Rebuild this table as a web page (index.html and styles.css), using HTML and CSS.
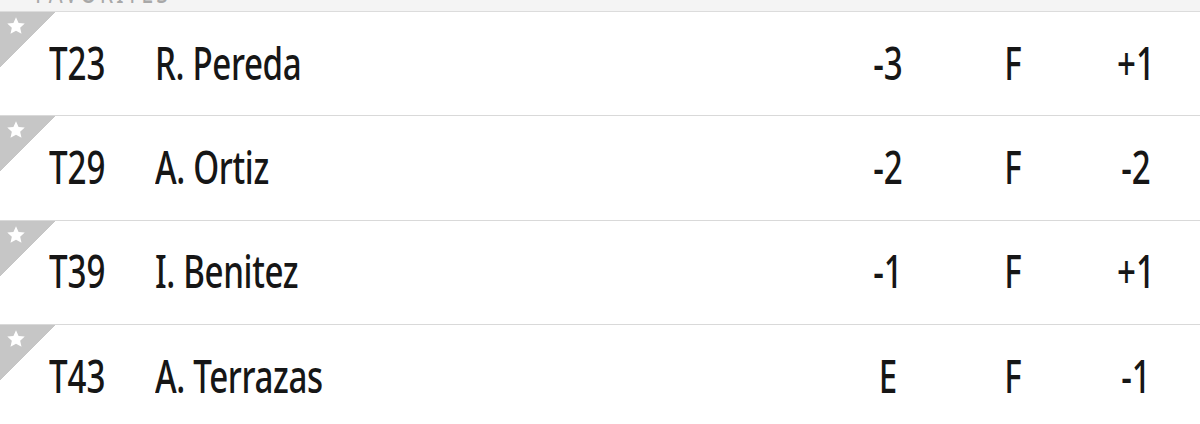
FILE: index.html
```html
<!DOCTYPE html>
<html>
<head>
<meta charset="utf-8">
<link rel="stylesheet" href="styles.css">
</head>
<body>
<div class="board">
  <div class="section-head"><span class="section-label">FAVORITES</span></div>
  <div class="row">
    <span class="fav"><svg viewBox="0 0 24 24" class="star"><path d="M12 1.5l3.1 6.8 7.4.8-5.5 5 1.6 7.3L12 17.6l-6.6 3.8L7 14.1l-5.5-5 7.4-.8z"/></svg></span>
    <span class="pos">T23</span><span class="name">R. Pereda</span>
    <span class="score">-3</span><span class="thru">F</span><span class="today">+1</span>
  </div>
  <div class="row">
    <span class="fav"><svg viewBox="0 0 24 24" class="star"><path d="M12 1.5l3.1 6.8 7.4.8-5.5 5 1.6 7.3L12 17.6l-6.6 3.8L7 14.1l-5.5-5 7.4-.8z"/></svg></span>
    <span class="pos">T29</span><span class="name">A. Ortiz</span>
    <span class="score">-2</span><span class="thru">F</span><span class="today">-2</span>
  </div>
  <div class="row">
    <span class="fav"><svg viewBox="0 0 24 24" class="star"><path d="M12 1.5l3.1 6.8 7.4.8-5.5 5 1.6 7.3L12 17.6l-6.6 3.8L7 14.1l-5.5-5 7.4-.8z"/></svg></span>
    <span class="pos">T39</span><span class="name">I. Benitez</span>
    <span class="score">-1</span><span class="thru">F</span><span class="today">+1</span>
  </div>
  <div class="row">
    <span class="fav"><svg viewBox="0 0 24 24" class="star"><path d="M12 1.5l3.1 6.8 7.4.8-5.5 5 1.6 7.3L12 17.6l-6.6 3.8L7 14.1l-5.5-5 7.4-.8z"/></svg></span>
    <span class="pos">T43</span><span class="name">A. Terrazas</span>
    <span class="score">E</span><span class="thru">F</span><span class="today">-1</span>
  </div>
</div>
</body>
</html>
```

FILE: styles.css
```css
html, body {
  margin: 0;
  padding: 0;
  background: #ffffff;
}
.board {
  font-family: "Noto Sans", "DejaVu Sans", sans-serif;
  color: #161616;
}
.section-head {
  height: 11px;
  background: #f4f4f4;
  border-bottom: 1px solid #dcdcdc;
  overflow: hidden;
  display: flex;
  align-items: flex-end;
  padding: 0 0 0 35px;
}
.section-label {
  display: inline-block;
  font-size: 30px;
  line-height: 30px;
  letter-spacing: 4px;
  color: #a8a8a8;
  transform: scaleX(0.72) translateY(-4px);
  transform-origin: left center;
}
.row {
  position: relative;
  height: 99.4px;
  padding-bottom: 4px;
  border-bottom: 1px solid #d9d9d9;
  display: grid;
  grid-template-columns: 49px 106px 1fr 80px 170px 76px 26px;
  align-items: center;
  font-size: 46px;
  font-weight: 500;
  line-height: 1;
}
.row:last-child { border-bottom: none; }
.row > span:not(.fav) {
  transform: scaleX(0.72);
  white-space: nowrap;
}
.fav {
  position: absolute;
  left: 0;
  top: 0;
  width: 55px;
  height: 56px;
  background: linear-gradient(to bottom right, #c6c6c6 50%, transparent 50%);
}
.star {
  position: absolute;
  left: 6px;
  top: 4px;
  width: 20px;
  height: 20px;
  fill: #ffffff;
}
.pos { grid-column: 2; transform-origin: left center; }
.name { grid-column: 3; transform-origin: left center; letter-spacing: -0.5px; }
.score { grid-column: 4; text-align: center; transform-origin: center; }
.thru { grid-column: 5; text-align: center; transform-origin: center; }
.today { grid-column: 6; text-align: center; transform-origin: center; }
```
